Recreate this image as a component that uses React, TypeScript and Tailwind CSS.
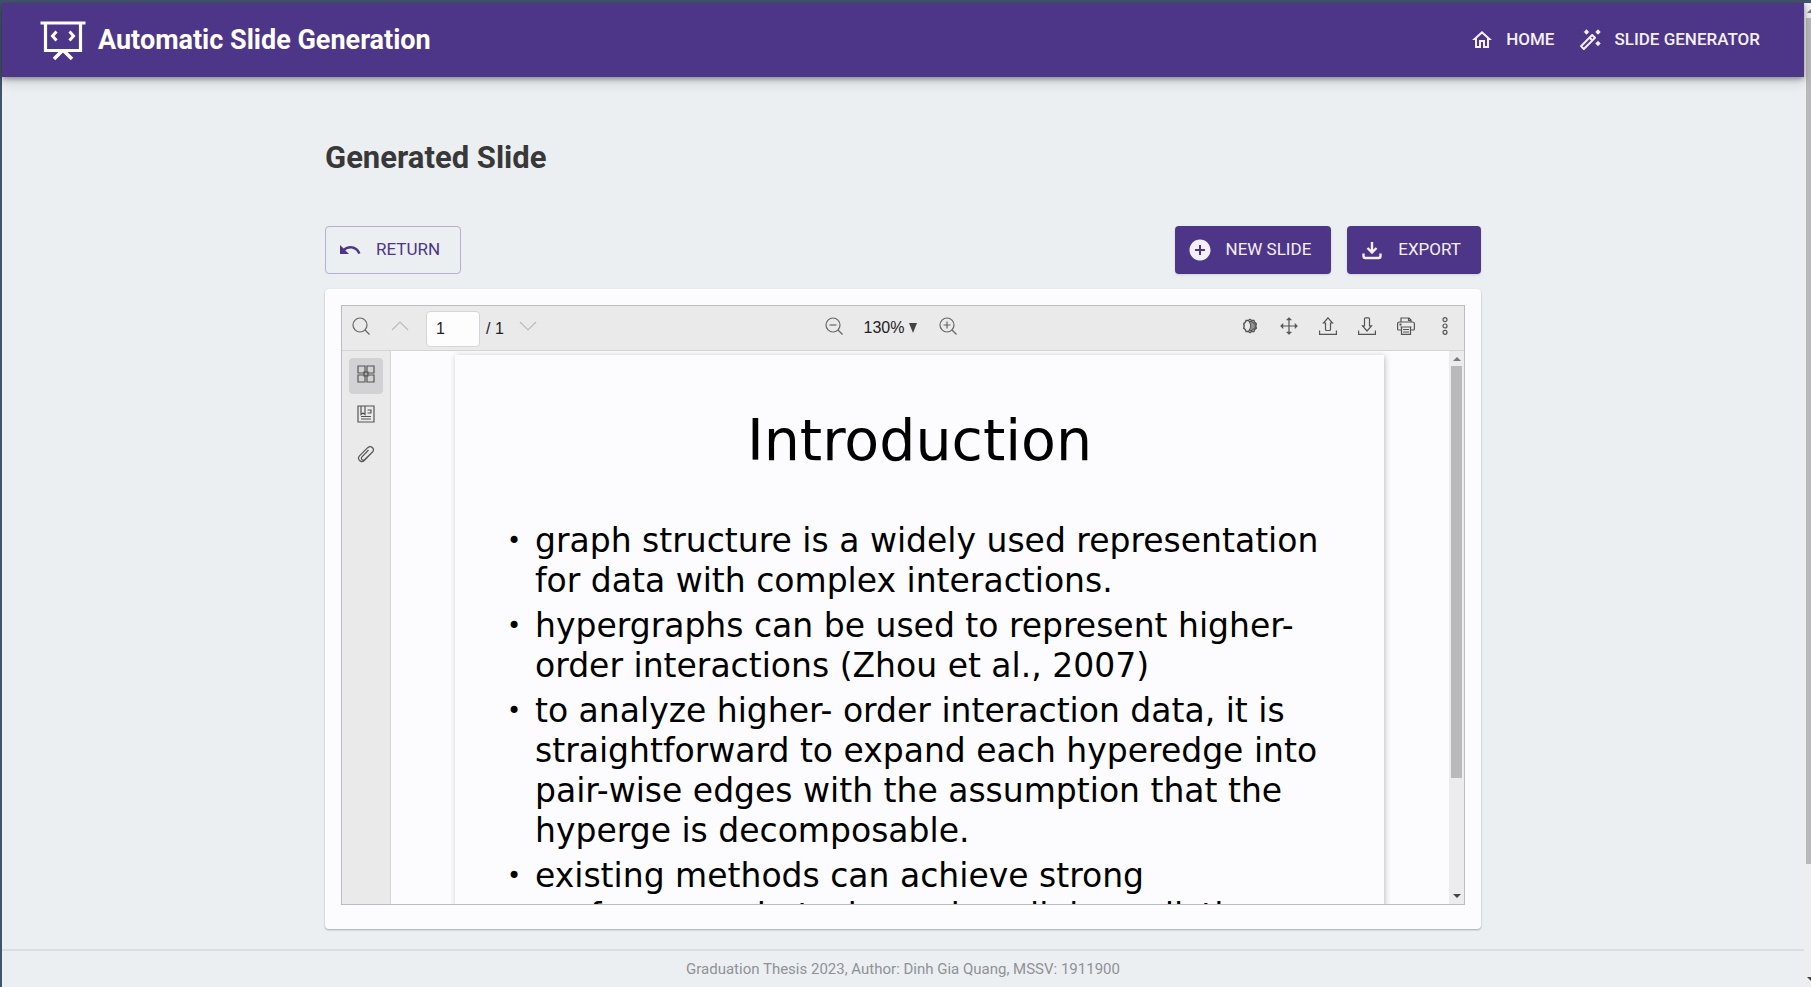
import React from 'react';

type IconProps = { className?: string };

const BoardIcon = ({ className }: IconProps) => (
  <svg className={className} viewBox="0 0 46 42" fill="none" stroke="currentColor" strokeWidth="3.2">
    <path d="M0.5 4h45" />
    <path d="M5.5 4v27.500h35V4" />
    <path d="M22.500 31.500L14 40M23.500 31.500l8.500 8.500" strokeWidth="3.600" />
    <path d="M16.500 12.500L12.500 17l4 4.500M29.500 12.500l4 4.500-4 4.500" strokeWidth="3" />
  </svg>
);

const HomeIcon = ({ className }: IconProps) => (
  <svg className={className} viewBox="0 0 24 24" fill="currentColor">
    <path d="m12 5.690 5 4.500V18h-2v-6H9v6H7v-7.810l5-4.500M12 3 2 12h3v8h6v-6h2v6h6v-8h3L12 3z" />
  </svg>
);

const WandIcon = ({ className }: IconProps) => (
  <svg className={className} viewBox="0 0 24 24" fill="currentColor">
    <path d="m20 7 .94-2.060L23 4l-2.060-.94L20 1l-.94 2.060L17 4l2.060.94zM8.500 7l.94-2.060L11.500 4l-2.060-.94L8.500 1l-.94 2.060L5.500 4l2.060.94zM20 12.500l-.94 2.060-2.060.94 2.060.94.94 2.060.94-2.060L23 15.500l-2.060-.94zm-2.290-3.380-2.830-2.830c-.2-.19-.45-.29-.71-.29-.26 0-.51.1-.71.29L2.290 17.460c-.39.39-.39 1.020 0 1.410l2.830 2.830c.2.2.45.3.71.3s.51-.1.71-.29l11.170-11.170c.39-.39.39-1.030 0-1.420zm-3.540-.7 1.410 1.410L14.410 11 13 9.590l1.170-1.170zM5.830 19.590l-1.410-1.410L11.590 11 13 12.410l-7.170 7.180z" />
    <circle cx="20" cy="4" r="1.900" />
    <circle cx="8.500" cy="4" r="1.900" />
    <circle cx="20" cy="15.500" r="1.900" />
  </svg>
);

const UndoIcon = ({ className }: IconProps) => (
  <svg className={className} viewBox="0 0 24 24" fill="currentColor">
    <path d="M12.500 8c-2.650 0-5.050.99-6.900 2.600L2 7v9h9l-3.620-3.620c1.390-1.160 3.160-1.880 5.120-1.880 3.540 0 6.550 2.310 7.600 5.500l2.370-.78C21.080 11.030 17.150 8 12.500 8z" />
  </svg>
);

const AddIcon = ({ className }: IconProps) => (
  <svg className={className} viewBox="0 0 24 24" fill="currentColor">
    <path d="M12 1.500C6.200 1.500 1.500 6.200 1.500 12S6.200 22.500 12 22.500 22.500 17.800 22.500 12 17.800 1.500 12 1.500zm5 11.500h-4v4h-2v-4H7v-2h4V7h2v4h4v2z" />
  </svg>
);

const ExportIcon = ({ className }: IconProps) => (
  <svg className={className} viewBox="0 0 24 24" fill="none" stroke="currentColor" strokeWidth="2.400">
    <path d="M12 4v10M7.500 10l4.500 4.500 4.500-4.500M3.500 15.500v2.500a2 2 0 0 0 2 2h13a2 2 0 0 0 2-2v-2.500" />
  </svg>
);

const Thin = ({ className, children }: IconProps & { children: React.ReactNode }) => (
  <svg className={className ?? 'size-4.5'} viewBox="0 0 18 18" fill="none" stroke="currentColor" strokeWidth="1.200">
    {children}
  </svg>
);

const SearchShape = () => (
  <>
    <circle cx="8" cy="8" r="7" />
    <path d="M13 13l4.500 4.500" />
  </>
);

const IconButton = ({ label, className, children }: { label: string; className: string; children: React.ReactNode }) => (
  <button type="button" aria-label={label} className={`flex items-center justify-center ${className}`}>
    {children}
  </button>
);

const bullets = [
  'graph structure is a widely used representation for data with complex interactions.',
  'hypergraphs can be used to represent higher-order interactions (Zhou et al., 2007)',
  'to analyze higher- order interaction data, it is straightforward to expand each hyperedge into pair-wise edges with the assumption that the hyperge is decomposable.',
  'existing methods can achieve strong performance in tasks such as link prediction',
];

const Header = () => (
  <header className="z-10 flex h-[74px] shrink-0 items-center justify-between bg-[#4d3587] pr-11 pl-[38px] text-white shadow-[0_2px_5px_rgba(0,0,0,0.35),0_5px_12px_rgba(0,0,0,0.14)]">
    <div className="flex items-center gap-3">
      <BoardIcon className="h-[42px] w-[46px]" />
      <span className="text-[27px] leading-8 font-bold">Automatic Slide Generation</span>
    </div>
    <nav className="flex items-center gap-6 text-[17px] font-medium text-[#f4f0fa]">
      <a href="#home" className="flex items-center gap-3">
        <HomeIcon className="size-6" />
        HOME
      </a>
      <a href="#generator" className="flex items-center gap-3">
        <WandIcon className="size-6" />
        SLIDE GENERATOR
      </a>
    </nav>
  </header>
);

const Toolbar = () => (
  <div className="flex h-[45px] shrink-0 items-center justify-between border-b border-[#d4d4d6] bg-[#eaeaea] pr-[7px] pb-1 pl-[7px] font-['Liberation_Sans',sans-serif] text-base text-[#222]">
    <div className="flex flex-1 items-center">
      <IconButton label="Search" className="size-6 text-[#666]">
        <Thin><SearchShape /></Thin>
      </IconButton>
      <IconButton label="Previous page" className="ml-[15px] size-6 text-[#bbb]">
        <Thin><path d="M1 13l8-8 8 8" /></Thin>
      </IconButton>
      <input
        aria-label="Page number"
        defaultValue="1"
        className="mt-1.5 ml-3.5 h-9 w-[54px] rounded border border-[#d6d6d8] bg-[#fdfdfe] px-[9px]"
      />
      <span className="mt-1.5 ml-1.5 whitespace-nowrap">/ 1</span>
      <IconButton label="Next page" className="ml-3 size-6 text-[#bbb]">
        <Thin><path d="M1 5l8 8 8-8" /></Thin>
      </IconButton>
    </div>
    <div className="flex items-center gap-[18px] pr-6">
      <IconButton label="Zoom out" className="size-6 text-[#666]">
        <Thin><SearchShape /><path d="M4.500 8h7" /></Thin>
      </IconButton>
      <button type="button" className="flex items-center gap-1 pt-1">
        130%
        <svg className="size-2.5" viewBox="0 0 10 10" fill="#444"><path d="M1 0h8L5 10z" /></svg>
      </button>
      <IconButton label="Zoom in" className="size-6 text-[#666]">
        <Thin><SearchShape /><path d="M4.500 8h7M8 4.500v7" /></Thin>
      </IconButton>
    </div>
    <div className="flex flex-1 items-center justify-end gap-[15px] text-[#555]">
      <IconButton label="Toggle theme" className="size-6">
        <Thin className="size-4">
          <path d="M9 1.500l2 1.300 2.400-.1.900 2.200 1.800 1.600-.6 2.500.6 2.400-1.800 1.600-.9 2.200-2.400-.1-2 1.300-2-1.300-2.400.1-.9-2.200L1.900 11.400 2.500 9l-.6-2.500 1.800-1.600.9-2.200 2.400.1z" strokeWidth="1.600" />
          <path d="M8 4q3.500 5 0 10h3l4-3V7l-4-3z" fill="currentColor" fillOpacity="0.6" />
        </Thin>
      </IconButton>
      <IconButton label="Full screen" className="size-6">
        <Thin>
          <path d="M9 1v16M1 9h16" />
          <path d="M6.500 3L9 .5 11.500 3zM6.500 15L9 17.500l2.500-2.500zM3 6.500L.5 9 3 11.500zM15 6.500L17.500 9 15 11.500z" fill="currentColor" strokeWidth="0.500" />
        </Thin>
      </IconButton>
      <IconButton label="Open file" className="size-6">
        <Thin>
          <path d="M.6 13.500v3.800h16.800v-3.800M9 .8L13.500 6h-2v6.500q0 1-1 1h-3q-1 0-1-1V6h-2z" />
        </Thin>
      </IconButton>
      <IconButton label="Download" className="size-6">
        <Thin>
          <path d="M.6 13.500v3.800h16.800v-3.800M9 14l4.500-5.200h-2V1.800q0-1-1-1h-3q-1 0-1 1v7h-2z" />
        </Thin>
      </IconButton>
      <IconButton label="Print" className="size-6">
        <Thin>
          <path d="M4 5V1h8l2 2v2M11.500 1v2.500H14M4 13H1.500Q.6 13 .6 12V7q0-2 2-2h12.800q2 0 2 2v5q0 1-1 1H14M3.500 10h11M4.500 10v7.300h9V10M6 12.500h6M6 15h6" />
          <path d="M2.500 7.500h2" strokeWidth="2" />
        </Thin>
      </IconButton>
      <IconButton label="More actions" className="size-6">
        <Thin>
          <circle cx="9" cy="2.700" r="2" /><circle cx="9" cy="9" r="2" /><circle cx="9" cy="15.300" r="2" />
        </Thin>
      </IconButton>
    </div>
  </div>
);

const Sidebar = () => (
  <div className="flex w-[49px] shrink-0 flex-col items-center gap-1 border-r border-[#d4d4d6] bg-[#eaeaea] pt-[7px] text-[#555]">
    <IconButton label="Thumbnails" className="h-9 w-[34px] rounded bg-[#d2d2d4] pb-1">
      <Thin>
        <path d="M1 1h7v7H1zM10 1h7v7h-7zM1 10h7v7H1zM10 10h7v7h-7zM7 7h4v4H7z" />
      </Thin>
    </IconButton>
    <IconButton label="Bookmarks" className="h-9 w-[34px] pb-1">
      <Thin>
        <path d="M1 1h16v16H1zM4 1v8.500l2-1.500 2 1.500V1M10.500 5H14v3h-3.500M4 11.500h10M4 14h10" />
      </Thin>
    </IconButton>
    <IconButton label="Attachments" className="h-9 w-[34px] pb-1">
      <Thin>
        <path d="M14 8.500l-6.500 6.700c-3.500 3.300-8-1-4.800-4.500l8-8c3.200-3 7.500 1 4.800 4.300l-7.700 7.500c-2 1.800-4.500-.5-2.800-2.700L11.500 5" />
      </Thin>
    </IconButton>
  </div>
);

const InnerScrollbar = () => (
  <div aria-hidden="true" className="flex w-[15px] shrink-0 flex-col items-center bg-[#ececee]">
    <svg className="h-[15px] w-2 shrink-0" viewBox="0 0 8 15" fill="#777"><path d="M0 10l4-4 4 4z" /></svg>
    <div className="h-[412px] w-[11px] bg-[#b9b9bb]" />
    <div className="grow" />
    <svg className="h-[15px] w-2 shrink-0" viewBox="0 0 8 15" fill="#444"><path d="M0 5l4 4 4-4z" /></svg>
  </div>
);

const Slide = () => (
  <article className="ml-16 w-[929px] pt-[52px] pr-[52px] pl-[52px] font-['DejaVu_Sans',sans-serif] text-black shadow-[1px_1px_6px_rgba(0,0,0,0.25)]">
    <h2 className="text-center text-[57px] leading-[66px]">Introduction</h2>
    <ul className="mt-[48px] flex flex-col gap-[5px] text-[33px] leading-10">
      {bullets.map((text) => (
        <li key={text} className="flex">
          <span className="w-7 shrink-0 text-2xl leading-10">•</span>
          <span>{text}</span>
        </li>
      ))}
    </ul>
  </article>
);

export default function App() {
  return (
    <div className="flex min-h-screen border-t-3 border-l-2 border-[#43536b] bg-[#ebeff2] font-['Roboto',sans-serif]">
      <div className="flex min-w-0 grow flex-col">
        <Header />
        <main className="mx-auto w-full max-w-[1156px] pt-[61px]">
          <h1 className="text-[31px] leading-10 font-bold text-[#383838]">Generated Slide</h1>
          <div className="mt-12 flex gap-4 text-[17px]">
            <button type="button" className="mr-auto flex h-12 items-center gap-3.5 rounded border border-[#b7aed0] pr-5 pl-3 text-[#4d3587]">
              <UndoIcon className="size-6" />
              RETURN
            </button>
            <button type="button" className="flex h-12 items-center gap-3.5 rounded bg-[#4d3587] pr-5 pl-[13px] text-[#f4f0fa] shadow-sm">
              <AddIcon className="size-6" />
              NEW SLIDE
            </button>
            <button type="button" className="flex h-12 items-center gap-3.5 rounded bg-[#4d3587] pr-5 pl-[13px] text-[#f4f0fa] shadow-sm">
              <ExportIcon className="size-6" />
              EXPORT
            </button>
          </div>
          <section className="mt-[15px] rounded bg-[#fcfcfe] px-4 pt-4 pb-6 shadow-[0_1px_2px_rgba(0,0,0,0.3)]">
            <div className="flex h-[600px] flex-col border border-[#bdbdc0]">
              <Toolbar />
              <div className="flex min-h-0 grow">
                <Sidebar />
                <div className="min-w-0 grow overflow-hidden pt-1">
                  <Slide />
                </div>
                <InnerScrollbar />
              </div>
            </div>
          </section>
        </main>
        <footer className="mt-5 border-t-2 border-[#dcdde1] pt-2 text-center text-[15px] leading-5 text-[#8f9295]">
          Graduation Thesis 2023, Author: Dinh Gia Quang, MSSV: 1911900
        </footer>
      </div>
      <div aria-hidden="true" className="flex w-[7px] shrink-0 flex-col bg-[#eeeef1] pl-0.5">
        <svg className="h-[15px] w-[5px] shrink-0" viewBox="0 0 5 15" fill="#777"><path d="M1 10l4-4v4z" /></svg>
        <div className="h-[846px] bg-[#b9b9bb]" />
        <div className="grow" />
        <svg className="h-[15px] w-[5px] shrink-0" viewBox="0 0 5 15" fill="#444"><path d="M1 5h4v4z" /></svg>
      </div>
    </div>
  );
}
